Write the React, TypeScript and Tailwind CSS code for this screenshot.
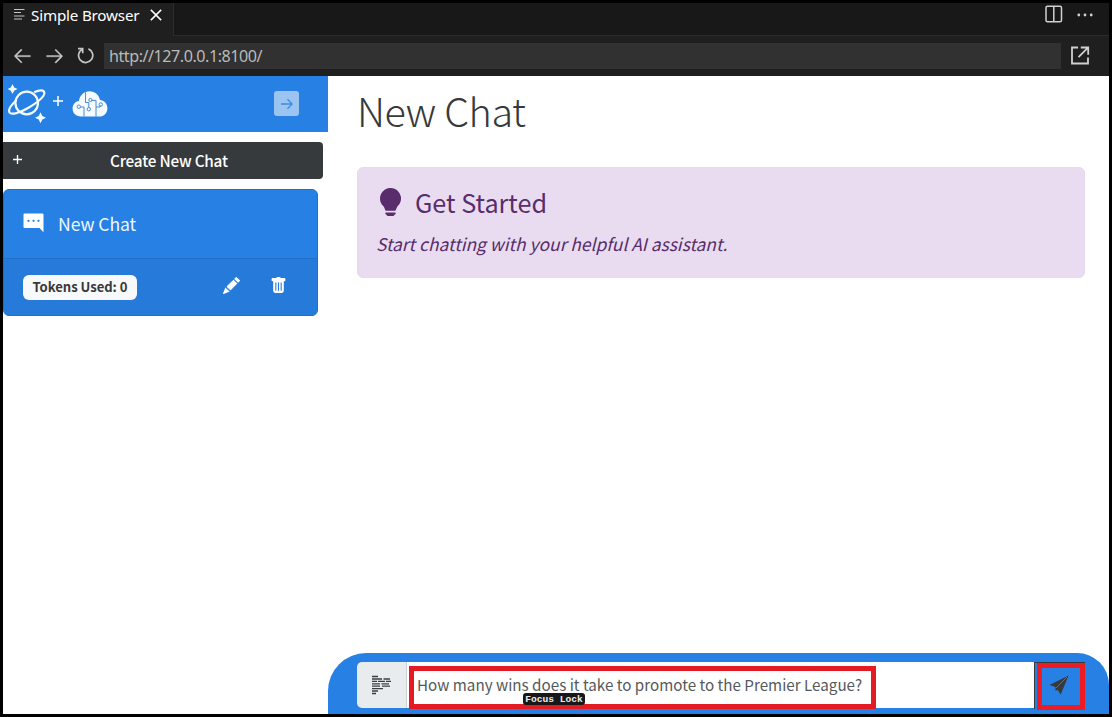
import React from "react";
import { BsLightbulbFill, BsPencilFill, BsTrashFill } from "react-icons/bs";
import { VscArrowLeft, VscArrowRight, VscClose } from "react-icons/vsc";

const ui = "font-['Noto_Sans','Open_Sans',sans-serif]";
const src = "font-['Noto_Sans_CJK_SC','Noto_Sans',sans-serif]";

function TabIcon() {
  return (
    <svg className="h-[13px] w-[12px]" viewBox="0 0 12 13" stroke="#c5c5c5" strokeWidth="1.2">
      <path d="M0 1.5H10.5M0 4.5H7M0 8H10.5M0 11H8" />
    </svg>
  );
}

function Planet() {
  return (
    <svg className="h-[42px] w-[42px] shrink-0" viewBox="0 0 42 42" fill="none" stroke="#f3faff" strokeWidth="2.2">
      <circle cx="18.7" cy="20" r="11.3" />
      <path d="M7.8 17.8C3.3 22 .2 27 1.5 29.5C3.2 32.2 12 29.8 19.6 25.3C28.5 20 36.8 13.4 36.3 9.7C35.8 6.5 31 7 26.2 9.2" />
      <g fill="#f3faff" stroke="none">
        <path d="M4.5 1L6.2 4.6L9.5 6L6.2 7.7L4.5 11L2.8 7.7L-.5 6L2.8 4.6Z" />
        <path d="M32.5 29.2L34.3 33L38 34.8L34.3 36.5L32.5 40.3L30.7 36.5L27 34.8L30.7 33Z" />
      </g>
    </svg>
  );
}

function Cloud() {
  return (
    <svg className="h-[28px] w-[36px] shrink-0" viewBox="0 0 36 28">
      <path d="M9 26.5C3.5 26.5.6 23 .6 18.6C.6 14.5 3.3 11.6 6.9 11.1C7.7 5.1 12 1.2 17.6 1.2C23.1 1.2 27 4.8 28 10.1C32.2 10.5 35.4 13.7 35.4 18.2C35.4 23 32 26.5 27.3 26.5Z" fill="#f5faff" />
      <g fill="none" stroke="#397fd0" strokeWidth=".9">
        <path d="M13.5 2.3V12.5H16.8V17.6M8.5 17H12V26.5M19.8 10.4H24V26.5M24 17H28.2V15.5" />
        <circle cx="6.8" cy="16.7" r="1.7" /><circle cx="16.8" cy="19.2" r="1.7" />
        <circle cx="18.4" cy="10" r="1.6" /><circle cx="28.8" cy="14.5" r="1.7" />
      </g>
    </svg>
  );
}

function Plus({ className }: { className: string }) {
  return <svg className={className} viewBox="0 0 10 10" stroke="white" strokeWidth="1.5"><path d="M0 5H10M5 0V10" /></svg>;
}

function PromptIcon() {
  return (
    <svg className="h-[20px] w-[21px]" viewBox="0 0 21 20" stroke="#3b3f43" strokeWidth="1.3">
      <path d="M1 1.5H7M1 4H11M12.5 4H19M1 6.4H6M7 6.4H14M15 6.4H20M1 8.8H9M10.5 8.8H18M1 11.2H9M11 11.2H19M1 13.6H12M1 16H7M1 18.5H5" />
    </svg>
  );
}

function Sidebar() {
  return (
    <aside className="w-[325px] shrink-0">
      <div className="flex h-[56px] items-start bg-[#2780e3]">
        <div className="flex pl-[5px] pt-[7px]"><Planet /></div>
        <Plus className="ml-[3px] mt-[20px] h-[10px] w-[10px]" />
        <div className="ml-[9px] mt-[14px]"><Cloud /></div>
        <button className="ml-[166px] mt-[15px] flex h-[25px] w-[25px] items-center justify-center rounded-[3px] bg-[#9cc4f1]">
          <svg className="h-[12px] w-[12px]" viewBox="0 0 12 12" fill="none" stroke="#3d8be4" strokeWidth="1.3"><path d="M0 6H11.3M6.5 1.3L11.2 6L6.5 10.7" /></svg>
        </button>
      </div>
      <button className="mt-[10px] flex h-[37px] w-[320px] items-center rounded-r-[4px] bg-[#373a3c] pl-[10px] text-white">
        <Plus className="-mt-[2px] h-[9px] w-[9px]" />
        <span className={`${src} ml-[88px] whitespace-nowrap text-[15.3px] font-medium leading-[37px] tracking-[-0.2px]`}>Create New Chat</span>
      </button>
      <div className="mt-[10px] h-[127px] w-[315px] overflow-hidden rounded-[6px] border border-[#2270c7] bg-[#2780e3]">
        <div className="flex h-[69px] items-center border-b border-[#226fc5] pl-[19px]">
          <svg className="-mt-[3px] h-[20px] w-[21px]" viewBox="0 0 21 20">
            <path d="M1.5 .5H19.5Q20.5 .5 20.5 1.5V19.2L16.5 15H1.5Q.5 15 .5 14V1.5Q.5 .5 1.5 .5Z" fill="white" />
            <g fill="#2780e3"><circle cx="5.5" cy="7.8" r="1.15" /><circle cx="10.5" cy="7.8" r="1.15" /><circle cx="15.5" cy="7.8" r="1.15" /></g>
          </svg>
          <span className={`${src} -mt-[1px] ml-[14px] whitespace-nowrap text-[17.6px] leading-6 tracking-[-0.08px] text-[#edf7ff]`}>New Chat</span>
        </div>
        <div className="flex h-[56px] items-center bg-[#257ada] pl-[19px] text-white">
          <span className={`${src} flex h-[25px] w-[114px] items-center justify-center whitespace-nowrap rounded-[6px] bg-[#f8f9fa] text-[13.1px] font-bold tracking-[-0.04px] text-[#373a3c]`}>Tokens Used: 0</span>
          <BsPencilFill className="-mt-[3px] ml-[86px] h-[17px] w-[17px]" />
          <BsTrashFill className="-mt-[3px] ml-[30px] h-[17px] w-[17px]" />
        </div>
      </div>
    </aside>
  );
}

export default function App() {
  return (
    <div className="h-[717px] w-[1112px] overflow-hidden bg-black p-[3px]">
      <div className="flex h-[711px] flex-col overflow-hidden bg-white">
        <header className={`${ui} shrink-0 bg-[#181818]`}>
          <div className="flex h-[33px]">
            <div className="flex w-[171px] shrink-0 items-start border-r border-[#2b2b2b] bg-[#1f1f1f] pl-[11px]">
              <div className="mt-[5px]"><TabIcon /></div>
              <span className="ml-[5px] w-[110px] whitespace-nowrap text-[15.2px] leading-[24px] tracking-[-0.19px] text-white">Simple Browser</span>
              <VscClose className="ml-[5px] mt-[2px] h-[20px] w-[20px] text-white" stroke="currentColor" strokeWidth="0.35" />
            </div>
            <div className="flex flex-1 justify-end border-b border-[#2b2b2b] pr-[16px]">
              <svg className="mr-[1px] mt-[2px] h-[18px] w-[18px]" viewBox="0 0 18 18" fill="none" stroke="#d0d0d0" strokeWidth="1.5"><rect x="1" y="1.3" width="15.5" height="15.5" rx="1.5" /><path d="M8.8 1.3V16.8" /></svg>
              <svg className="ml-[13px] mt-[10px] h-[4px] w-[16px]" viewBox="0 0 16 4" fill="#d0d0d0"><circle cx="1.8" cy="2" r="1.4" /><circle cx="8" cy="2" r="1.4" /><circle cx="14.2" cy="2" r="1.4" /></svg>
            </div>
          </div>
          <div className="flex h-[40px] items-start bg-[#1f1f1f] pl-[9px] text-[#c5c5c5]">
            <VscArrowLeft className="mt-[9px] h-[21px] w-[21px]" stroke="currentColor" strokeWidth="0.3" />
            <VscArrowRight className="ml-[11px] mt-[9px] h-[21px] w-[21px]" stroke="currentColor" strokeWidth="0.3" />
            <svg className="ml-[12px] mt-[11px] h-[17px] w-[17px]" viewBox="0 0 17 17" fill="none" stroke="currentColor" strokeWidth="1.7"><path d="M5.3 2.2A7.1 7.1 0 1 0 11.4 1.9M1 1.7H5.7V6.3" /></svg>
            <div className="ml-[10px] mt-[7px] h-[26px] w-[957px] bg-[#313131] pl-[5px] text-[16.1px] leading-[26px] tracking-[-0.45px] text-[#bababa]"><span className="whitespace-nowrap">http://127.0.0.1:8100/</span></div>
            <svg className="ml-[10px] mt-[10px] h-[19px] w-[19px]" viewBox="0 0 19 19" fill="none" stroke="#d0d0d0" strokeWidth="1.8"><path d="M7 1.5H1V17.5H17V11.5M9.8 1.5H17.2V8.8M17 1.7L7.5 11.2" /></svg>
          </div>
        </header>
        <div className="flex min-h-0 flex-1">
          <Sidebar />
          <main className={`${src} flex min-w-0 flex-1 flex-col text-[#373a3c]`}>
            <h1 className="mt-[8px] whitespace-nowrap pl-[29px] text-[39.6px] font-extralight leading-[52px] tracking-[-0.42px]">New Chat</h1>
            <section className="ml-[29px] mt-[31px] h-[111px] w-[728px] rounded-[6px] border border-[#e8d8f0] bg-[#e9dcf1] text-[#592c6b]">
              <div className="flex pl-[18px] pt-[18px]">
                <BsLightbulbFill className="mt-[2px] h-[28px] w-[29px]" />
                <h2 className="-mt-[3px] mb-[1px] ml-[10px] whitespace-nowrap text-[25.2px] leading-[38px]">Get Started</h2>
              </div>
              <p className="ml-[18px] mt-[10px] whitespace-nowrap text-[17.4px] italic leading-6">Start chatting with your helpful AI assistant.</p>
            </section>
            <footer className="mt-auto flex h-[61px] items-start rounded-tl-[38px] rounded-tr-[32px] bg-[#2780e3] pl-[29px] pt-[9px]">
              <div className="flex h-[46px] w-[50px] shrink-0 items-center justify-center rounded-l-[5px] border-r border-[#ccd2d8] bg-[#e9ecef]"><PromptIcon /></div>
              <div className="relative h-[46px] w-[627px] shrink-0 bg-white">
                <div className="absolute left-[2px] top-[4px] flex h-[43px] w-[467px] items-start border-[5px] border-[#e31b23] pl-[3px]">
                  <span className="mt-[1px] whitespace-nowrap text-[15.2px] leading-6 text-[#55595c]">How many wins does it take to promote to the Premier League?</span>
                </div>
                <span className="absolute left-[116px] top-[31px] flex h-[12px] w-[62px] items-center justify-center whitespace-nowrap rounded-[3px] bg-[#181818] pt-[2px] font-['Liberation_Mono',monospace] text-[9.6px] font-bold leading-3 text-[#eeeeee]">Focus Lock</span>
              </div>
              <button className="flex h-[47px] w-[51px] items-start border-l border-t border-[#373a3c] pl-[2px]">
                <span className="flex h-[47px] w-[48px] shrink-0 items-start justify-center border-[5px] border-[#ed1c24] pr-[4px] pt-[7px]">
                  <svg className="h-[20px] w-[20px]" viewBox="0 0 20 20"><path d="M.4 10L19.6 .4L11.7 19.6L8.5 14.8L6.5 16V12Z" fill="#373a3c" /><path d="M7 13L18 2" stroke="#667386" strokeWidth=".9" /></svg>
                </span>
              </button>
            </footer>
          </main>
        </div>
      </div>
    </div>
  );
}
